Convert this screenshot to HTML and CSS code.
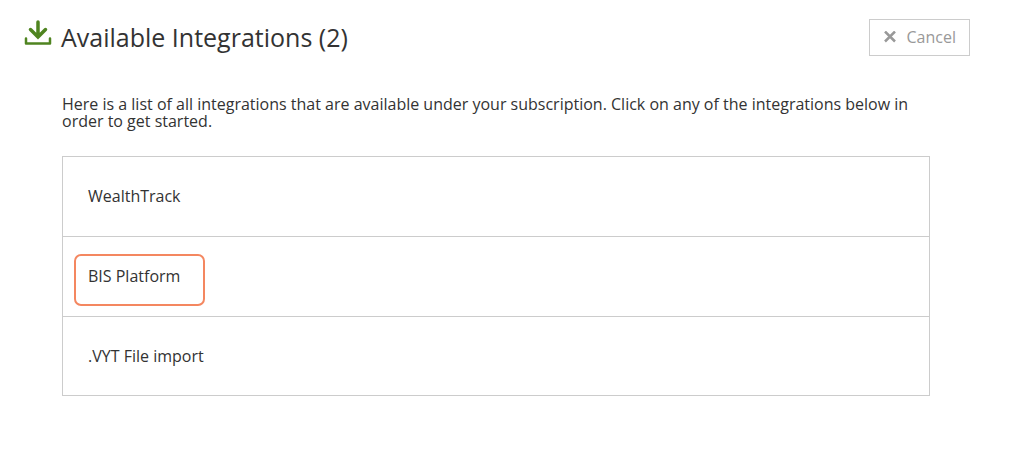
FILE: index.html
```html
<!doctype html>
<html lang="en">
<head>
<meta charset="utf-8">
<title>Available Integrations</title>
<link rel="stylesheet" href="styles.css">
</head>
<body>
<header class="header">
	<svg class="icon" viewBox="0 0 28 27" aria-hidden="true">
		<path class="arrow" d="M14 3v15M6.500 10.500l7.500 7.500 7.500-7.500"/>
		<path class="tray" d="M2 19.500v5h24v-5"/>
	</svg>
	<h1>Available Integrations (2)</h1>
	<button type="button" class="cancel">
		<svg viewBox="0 0 12 12" aria-hidden="true"><path d="M1 0.500l10 10M11 0.500L1 10.500"/></svg>
		Cancel
	</button>
</header>
<main class="content">
	<p>Here is a list of all integrations that are available under your subscription. Click on any of the integrations below in order to get started.</p>
	<ul class="list">
		<li><a href="#wealthtrack">WealthTrack</a></li>
		<li class="marked"><a href="#bis">BIS Platform</a></li>
		<li><a href="#vyt">.VYT File import</a></li>
	</ul>
</main>
</body>
</html>
```
FILE: styles.css
```css
*,*::before{box-sizing:border-box;}
body{margin:0;background:#fff;color:#333;font:16px/17px "Open Sans",sans-serif;}
.header{display:flex;align-items:flex-start;padding:19px 45px 0 24px;}
.header h1{flex:1;margin:0 0 0 9px;font-size:25px;line-height:36px;font-weight:400;}
.icon{width:28px;height:27px;fill:none;stroke:#4f8420;stroke-linecap:round;}
.arrow{stroke-width:3.5;}
.tray{stroke-width:2.5;stroke-linejoin:round;}
.cancel{display:flex;align-items:center;gap:11px;height:37px;padding:0 13px 2px 14px;background:#fff;border:1px solid #ccc;color:#999;font:16px "Open Sans",sans-serif;}
.cancel svg{width:12px;height:12px;fill:none;stroke:#999;stroke-width:2.5;}
.content{padding:40px 85px 0 62px;}
.content p{margin:0 0 26px;}
.list{list-style:none;margin:0;padding:0;border:1px solid #ccc;}
.list li{position:relative;border-top:1px solid #ccc;}
.list li:first-child{border-top:0;}
.list a{display:block;padding:31px 25px;color:#333;text-decoration:none;}
.list li:last-child a{padding-bottom:30px;}
/* highlight drawn over the row */
.marked::before{content:"";position:absolute;left:11px;top:17px;width:131px;height:52px;border:2px solid #f48760;border-radius:7px;pointer-events:none;}
```
